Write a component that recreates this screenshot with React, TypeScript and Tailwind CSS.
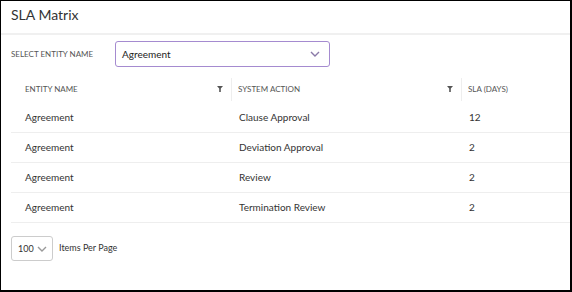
import React from 'react';

const rows = [
  { entity: 'Agreement', action: 'Clause Approval', sla: '12' },
  { entity: 'Agreement', action: 'Deviation Approval', sla: '2' },
  { entity: 'Agreement', action: 'Review', sla: '2' },
  { entity: 'Agreement', action: 'Termination Review', sla: '2' },
];

const FilterIcon = () => (
  <svg width="6" height="6" viewBox="0 0 6 6" className="shrink-0">
    <path d="M0 0h6L3.8 2.6V6H2.2V2.6z" fill="#555" />
  </svg>
);

const Chevron = ({ color }: { color: string }) => (
  <svg width="10" height="6" viewBox="0 0 10 6">
    <path d="M1 1l4 4 4-4" fill="none" stroke={color} strokeWidth="1.4" />
  </svg>
);

export default function App() {
  return (
    <div className="w-[572px] h-[292px] bg-white border-l border-t border-r-2 border-b-2 border-black flex flex-col font-['Lato',sans-serif] text-[#333]">
      {/* Header */}
      <div className="h-[34px] shrink-0 flex items-center pb-[4px] pl-[10px] border-b-2 border-[#f0f0f0]">
        <h1 className="text-[14px] leading-none text-[#333]">SLA Matrix</h1>
      </div>

      {/* Entity select */}
      <div className="flex items-center mt-[6px] pl-[10px] h-[26px]">
        <span className="w-[104px] text-[8px] text-[#555]">SELECT ENTITY NAME</span>
        <div className="w-[215px] h-[26px] border border-[#a58bd0] rounded-[3px] flex items-center justify-between pl-[6px] pr-[9px]">
          <span className="text-[10px] text-[#222]">Agreement</span>
          <Chevron color="#8a79a8" />
        </div>
      </div>

      {/* Table */}
      <div className="mt-[8px] ml-[10px]">
        <div className="flex h-[28px] items-center text-[8px] text-[#555]">
          <div className="w-[221px] pl-[14px] flex items-center justify-between pr-[8px] border-r border-[#eee] h-[23px]">
            <span>ENTITY NAME</span>
            <FilterIcon />
          </div>
          <div className="w-[230px] pl-[6px] flex items-center justify-between pr-[8px] border-r border-[#eee] h-[23px]">
            <span>SYSTEM ACTION</span>
            <FilterIcon />
          </div>
          <div className="pl-[6px]">SLA (DAYS)</div>
        </div>
        {rows.map((r) => (
          <div key={r.action} className="flex h-[30px] items-center text-[10px] border-b border-[#eee]">
            <div className="w-[221px] pl-[14px]">{r.entity}</div>
            <div className="w-[230px] pl-[7px]">{r.action}</div>
            <div className="pl-[7px]">{r.sla}</div>
          </div>
        ))}
      </div>

      {/* Pagination */}
      <div className="flex items-center mt-[13px] pl-[10px]">
        <div className="w-[42px] h-[25px] border border-[#ccc] rounded-[3px] flex items-center justify-between pl-[6px] pr-[5px]">
          <span className="text-[9px]">100</span>
          <Chevron color="#999" />
        </div>
        <span className="ml-[6px] mb-[2px] text-[9px] text-[#333]">Items Per Page</span>
      </div>
    </div>
  );
}
